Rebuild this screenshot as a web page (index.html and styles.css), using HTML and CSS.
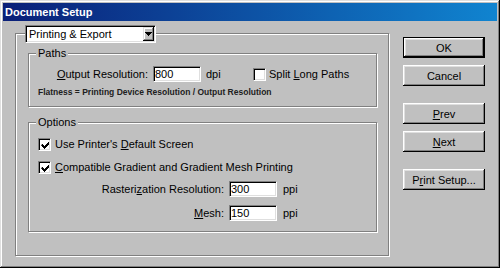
FILE: index.html
```html
<!DOCTYPE html>
<html lang="en">
<head>
    <meta charset="UTF-8">
    <title>Document Setup</title>
    <link rel="stylesheet" href="styles.css">
</head>
<body>

    <div class="window">
        <div class="titlebar">Document Setup</div>
        <div class="dialog">
            <div class="outer">
                <div class="select">
                    <span class="select-text">Printing &amp; Export</span>
                    <span class="select-arrow">
                        <svg width="7" height="4" viewBox="0 0 7 4"><path d="M0 0h7v1h-1v1h-1v1h-1v1h-1v-1h-1v-1h-1v-1h-1z" fill="#000"/></svg>
                    </span>
                </div>

                <div class="group paths">
                    <div class="group-label">Paths</div>
                    <div class="row">
                        <span class="field-label short"><u>O</u>utput Resolution:</span>
                        <input class="edit" type="text" value="800">
                        <span class="unit wide">dpi</span>
                        <span class="check"></span>
                        <span class="check-text">Split <u>L</u>ong Paths</span>
                    </div>
                    <div class="note">Flatness = Printing Device Resolution / Output Resolution</div>
                </div>

                <div class="group options">
                    <div class="group-label">Options</div>
                    <div class="row check-row first">
                        <span class="check checked">
                            <svg width="9" height="9" viewBox="0 0 9 9"><path d="M1 3h1v1h1v1h1v-1h1v-1h1v-1h1v-1h1v3h-1v1h-1v1h-1v1h-1v1h-1v-1h-1v-1h-1v-1h-1z" fill="#000"/></svg>
                        </span>
                        <span class="check-text">Use Printer's <u>D</u>efault Screen</span>
                    </div>
                    <div class="row check-row second">
                        <span class="check checked">
                            <svg width="9" height="9" viewBox="0 0 9 9"><path d="M1 3h1v1h1v1h1v-1h1v-1h1v-1h1v-1h1v3h-1v1h-1v1h-1v1h-1v1h-1v-1h-1v-1h-1v-1h-1z" fill="#000"/></svg>
                        </span>
                        <span class="check-text"><u>C</u>ompatible Gradient and Gradient Mesh Printing</span>
                    </div>
                    <div class="row field-row raster">
                        <span class="field-label long">Rasteri<u>z</u>ation Resolution:</span>
                        <input class="edit" type="text" value="300">
                        <span class="unit">ppi</span>
                    </div>
                    <div class="row field-row mesh">
                        <span class="field-label long"><u>M</u>esh:</span>
                        <input class="edit" type="text" value="150">
                        <span class="unit">ppi</span>
                    </div>
                </div>
            </div>

            <div class="buttons">
                <button class="btn default">OK</button>
                <button class="btn">Cancel</button>
                <button class="btn spaced"><u>P</u>rev</button>
                <button class="btn"><u>N</u>ext</button>
                <button class="btn spaced">P<u>r</u>int Setup...</button>
            </div>
        </div>
    </div>

</body>
</html>
```

FILE: styles.css
```css
body {
    margin: 0;
    font-family: "Liberation Sans", Arial, sans-serif;
    font-size: 11px;
    color: #000;
    background-color: #c0c0c0;
}

.window {
    box-sizing: border-box;
    width: 500px;
    height: 268px;
    padding: 3px;
    background-color: #c0c0c0;
    box-shadow: inset -1px -1px 0 #000, inset 1px 1px 0 #dfdfdf,
                inset -2px -2px 0 #808080, inset 2px 2px 0 #fff;
}

.titlebar {
    height: 18px;
    line-height: 18px;
    padding-left: 2px;
    color: #fff;
    font-weight: bold;
    background: linear-gradient(to right, #0a1f78, #1084d0);
}

.dialog {
    display: flex;
    align-items: flex-start;
    padding-left: 12px;
}

/* etched frames */
.outer,
.group {
    box-sizing: border-box;
    border: 1px solid #808080;
    box-shadow: 1px 1px 0 #fff, inset 1px 1px 0 #fff;
}

.outer {
    width: 374px;
    height: 223px;
    margin-top: 12px;
    padding-left: 12px;
}

.select {
    box-sizing: border-box;
    display: flex;
    width: 131px;
    height: 18px;
    margin: -9px 0 0 -3px;
    background-color: #fff;
    border: 1px solid;
    border-color: #808080 #fff #fff #808080;
    box-shadow: inset 1px 1px 0 #000, inset -1px -1px 0 #dfdfdf;
    padding: 1px;
}

.select-text {
    flex: 1;
    line-height: 14px;
    padding-left: 2px;
}

.select-arrow {
    box-sizing: border-box;
    display: flex;
    align-items: center;
    justify-content: center;
    width: 11px;
    height: 14px;
    background-color: #c0c0c0;
    box-shadow: inset -1px -1px 0 #000, inset 1px 1px 0 #dfdfdf,
                inset -2px -2px 0 #808080, inset 2px 2px 0 #fff;
}

.group {
    width: 349px;
}

.paths {
    height: 54px;
    margin-top: 10px;
}

.options {
    height: 110px;
    margin-top: 15px;
}

.group-label {
    width: fit-content;
    margin: -7px 0 0 7px;
    padding: 0 2px;
    line-height: 13px;
    background-color: #c0c0c0;
}

.row {
    display: flex;
    align-items: center;
    padding-left: 9px;
}

.paths .row {
    margin-top: 6px;
    height: 16px;
}

.field-label {
    text-align: right;
    margin-right: 5px;
    white-space: nowrap;
}

.field-label.short {
    width: 110px;
}

.field-label.long {
    width: 186px;
}

.edit {
    box-sizing: border-box;
    width: 48px;
    height: 16px;
    margin: 0;
    padding: 0 1px;
    font: inherit;
    color: #000;
    background-color: #fff;
    border: 1px solid;
    border-color: #808080 #fff #fff #808080;
    box-shadow: inset 1px 1px 0 #000, inset -1px -1px 0 #dfdfdf;
    outline: none;
}

.unit {
    margin-left: 6px;
}

.unit.wide {
    width: 47px;
    margin-left: 5px;
}

.check {
    box-sizing: border-box;
    display: flex;
    align-items: center;
    justify-content: center;
    width: 13px;
    height: 13px;
    background-color: #fff;
    border: 1px solid;
    border-color: #808080 #fff #fff #808080;
    box-shadow: inset 1px 1px 0 #000, inset -1px -1px 0 #dfdfdf;
}

.check svg {
    margin: 1px 0 0 1px;
}

.check-text {
    margin-left: 3px;
    line-height: 13px;
}

.check-row .check-text {
    margin-left: 4px;
}

.note {
    margin-top: 6px;
    padding-left: 9px;
    font-size: 8.5px;
    font-weight: bold;
    line-height: 9px;
    color: #202020;
}

.check-row {
    height: 13px;
}

.check-row.first {
    margin-top: 9px;
}

.check-row.second {
    margin-top: 10px;
}

.field-row {
    height: 16px;
}

.field-row.raster {
    margin-top: 7px;
}

.field-row.mesh {
    margin-top: 8px;
}

/* buttons column */
.buttons {
    display: flex;
    flex-direction: column;
    gap: 7px;
    margin: 16px 0 0 14px;
}

.btn {
    box-sizing: border-box;
    width: 82px;
    height: 21px;
    margin: 0;
    padding: 0;
    font: inherit;
    color: #000;
    background-color: #c0c0c0;
    border: none;
    box-shadow: inset -1px -1px 0 #000, inset 1px 1px 0 #fff,
                inset -2px -2px 0 #808080, inset 2px 2px 0 #dfdfdf;
}

.btn.default {
    border: 1px solid #000;
}

.btn.spaced {
    margin-top: 10px;
}
```
